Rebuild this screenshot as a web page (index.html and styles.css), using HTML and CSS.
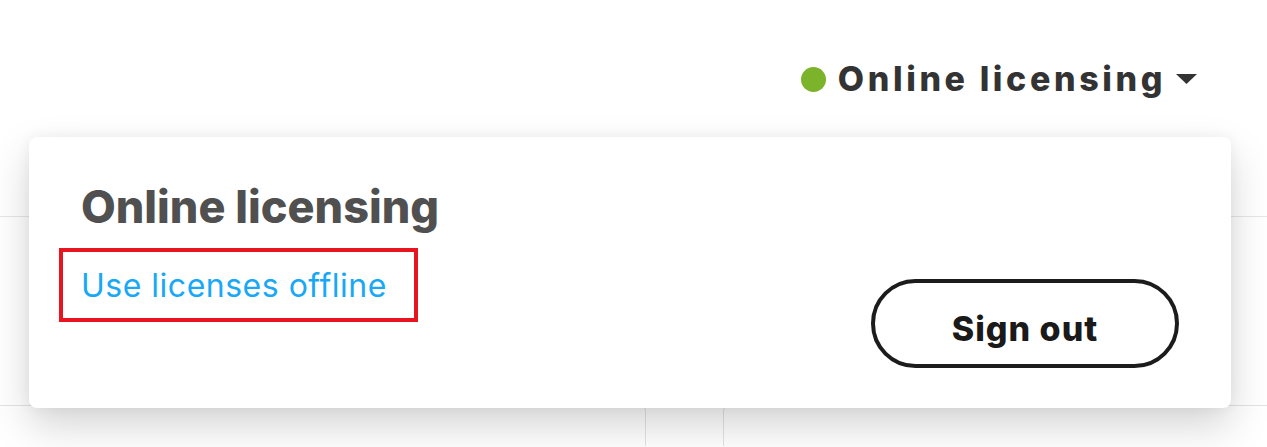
FILE: index.html
```html
<!DOCTYPE html>
<html lang="en">
<head>
    <meta charset="UTF-8">
    <meta name="viewport" content="width=device-width, initial-scale=1.0">
    <title>Licensing</title>
    <link rel="stylesheet" href="styles.css">
</head>
<body>
    <header class="topbar">
        <button class="status" type="button">
            <span class="dot"></span>
            <span class="status-label">Online licensing</span>
            <svg class="caret" width="21" height="10" viewBox="0 0 21 10"><path d="M0 0h21L10.5 10z" fill="#333"/></svg>
        </button>
    </header>

    <main class="panels">
        <section class="panel panel-left"></section>
        <section class="panel panel-right"></section>
    </main>

    <!-- licensing dropdown, opened from the status button -->
    <div class="dropdown">
        <div class="dropdown-text">
            <h2>Online licensing</h2>
            <a href="#" class="offline-link">Use licenses offline</a>
        </div>
        <button class="signout" type="button">Sign out</button>
    </div>
</body>
</html>
```

FILE: styles.css
```css
body { margin: 0; background: #fff; font-family: Inter, "Noto Sans", sans-serif; position: relative; height: 447px; overflow: hidden; }

.topbar { height: 217px; box-sizing: border-box; border-bottom: 1px solid #e6e6e6; display: flex; justify-content: flex-end; align-items: flex-start; padding: 57px 70px 0 0; }
.status { display: flex; align-items: center; background: none; border: none; padding: 0; cursor: pointer; font-family: inherit; color: #333; }
.dot { width: 25px; height: 25px; border-radius: 50%; background: #7bb32a; margin-right: 12px; }
.status-label { font-size: 34px; font-weight: 800; letter-spacing: 3.6px; line-height: 44px; }
.caret { margin-left: 10px; }

.panels { display: grid; grid-template-columns: 646px 1fr; column-gap: 77px; margin-top: 188px; }
.panel { height: 40px; border: 1px solid #e3e3e3; border-bottom: none; }
.panel-left { border-left: none; border-top-right-radius: 6px; }
.panel-right { border-right: none; border-top-left-radius: 6px; }

.dropdown { position: absolute; top: 137px; left: 29px; width: 1202px; height: 271px; box-sizing: border-box; background: #fff; border-radius: 8px;
    box-shadow: 0 18px 40px rgba(0, 0, 0, 0.17), 0 0 14px rgba(0, 0, 0, 0.05);
    padding: 43px 52px 40px 52px; display: flex; justify-content: space-between; }
.dropdown-text { display: flex; flex-direction: column; align-items: flex-start; }
.dropdown h2 { margin: 0 0 14px 0; font-size: 45px; line-height: 54px; font-weight: 800; color: #505050; }
.offline-link { margin-left: -22px; padding: 14px 27px 12px 18px; border: 4px solid #e8141f; font-size: 32px; line-height: 40px; letter-spacing: 0.5px; color: #18a8f6; text-decoration: none; }

.signout { align-self: flex-end; width: 308px; height: 89px; box-sizing: border-box; padding: 29px 0 18px; border: 4px solid #1c1c1c; border-radius: 45px; background: #fff; font-family: inherit; font-size: 34px; line-height: 34px; font-weight: 800; letter-spacing: 1px; color: #1a1a1a; cursor: pointer; }
```
